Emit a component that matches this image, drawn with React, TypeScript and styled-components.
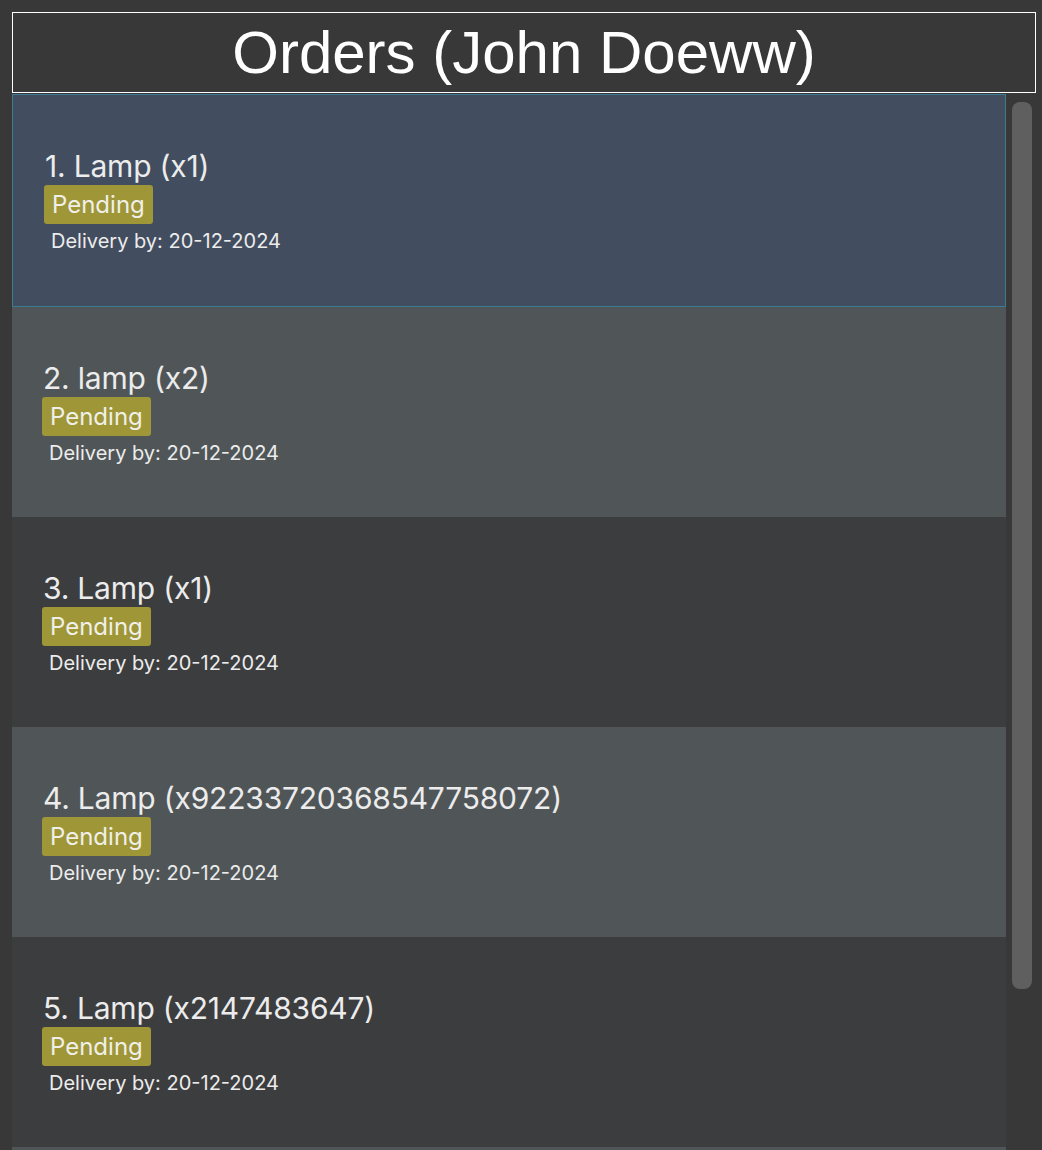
import React from 'react'
import styled, { createGlobalStyle } from 'styled-components'

const GlobalStyle = createGlobalStyle`
    html, body {
        margin: 0;
        padding: 0;
        background: #383838;
        overflow: hidden;
    }
`

const Page = styled.div`
    width: 1042px;
    height: 1150px;
    box-sizing: border-box;
    padding: 12px 0 0 12px;
    display: flex;
    flex-direction: column;
    gap: 1px;
    font-family: Inter, 'Open Sans', sans-serif;
    color: #ececec;
    overflow: hidden;
`

const Header = styled.div`
    width: 1024px;
    height: 81px;
    flex-shrink: 0;
    box-sizing: border-box;
    border: 1px solid #ffffff;
    display: flex;
    align-items: center;
    justify-content: center;
    font-family: 'Liberation Sans', Arial, sans-serif;
    font-size: 60px;
    color: #ffffff;
`

const Body = styled.div`
    display: flex;
    gap: 6px;
    flex: 1;
    min-height: 0;
`

const List = styled.div`
    width: 994px;
    display: flex;
    flex-direction: column;
    overflow: hidden;
`

type Tone = 'selected' | 'light' | 'dark'

const Item = styled.div<{ $tone: Tone }>`
    height: ${(p) => (p.$tone === 'selected' ? '213px' : '210px')};
    flex-shrink: 0;
    box-sizing: border-box;
    padding: ${(p) => (p.$tone === 'selected' ? '0 31px' : '0 30px')};
    display: flex;
    flex-direction: column;
    justify-content: center;
    background: ${(p) =>
        p.$tone === 'selected' ? '#424d5f' : p.$tone === 'light' ? '#505658' : '#3c3d3f'};
    border: ${(p) => (p.$tone === 'selected' ? '1px solid #3b7c92' : 'none')};
`

const Name = styled.div`
    font-size: 30px;
    line-height: 36px;
    letter-spacing: -0.2px;
    padding-left: 1px;
`

const Badge = styled.span`
    align-self: flex-start;
    background: #9f9638;
    border-radius: 3px;
    padding: 0 8px;
    height: 39px;
    line-height: 39px;
    font-size: 24px;
    color: #f0f0e8;
    margin-top: 1px;
`

const Delivery = styled.div`
    font-size: 20px;
    line-height: 24px;
    margin-top: 5px;
    padding-left: 7px;
`

const Track = styled.div`
    width: 20px;
    padding-top: 8px;
`

const Thumb = styled.div`
    height: 887px;
    border-radius: 8px;
    background: #5f5f5f;
`

const orders = [
    { name: 'Lamp', qty: '1' },
    { name: 'lamp', qty: '2' },
    { name: 'Lamp', qty: '1' },
    { name: 'Lamp', qty: '92233720368547758072' },
    { name: 'Lamp', qty: '2147483647' },
]

function App() {
    return (
        <>
            <GlobalStyle />
            <Page>
                <Header>Orders (John Doeww)</Header>
                <Body>
                    <List>
                        {orders.map((o, i) => (
                            <Item key={i} $tone={i === 0 ? 'selected' : i % 2 === 1 ? 'light' : 'dark'}>
                                <Name>
                                    {i + 1}. {o.name} (x{o.qty})
                                </Name>
                                <Badge>Pending</Badge>
                                <Delivery>Delivery by: 20-12-2024</Delivery>
                            </Item>
                        ))}
                        {/* next row peeks in below the fold */}
                        <Item $tone="light" />
                    </List>
                    <Track>
                        <Thumb />
                    </Track>
                </Body>
            </Page>
        </>
    )
}

export default App
